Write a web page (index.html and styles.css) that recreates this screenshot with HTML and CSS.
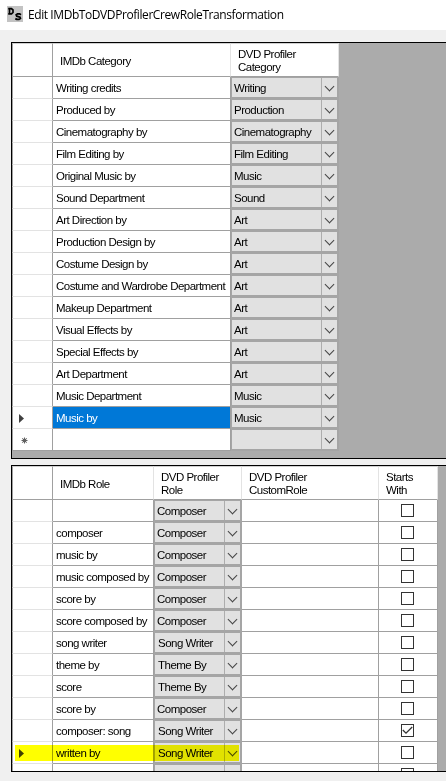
FILE: index.html
```html
<!DOCTYPE html>
<html lang="en">
<head>
<meta charset="utf-8">
<title>Edit IMDbToDVDProfilerCrewRoleTransformation</title>
<link rel="stylesheet" href="styles.css">
</head>
<body>
<header class="titlebar">
  <svg class="logo" width="16" height="16" viewBox="0 0 16 16"><rect width="16" height="16" fill="#c3c3c3"/><path d="M1.2 2.6H4.4L6 4V6.4L4.5 7.8H1.2M2.5 2.6V7.8" fill="none" stroke="#000" stroke-width="1.7"/><path d="M14 8.8L12.5 7.8H10.5L9.2 8.8L9.8 10.2L13 11.2L13.4 12.4L12 13.4H9.8L8.3 12.6" fill="none" stroke="#000" stroke-width="1.8"/></svg>
  <h1>Edit IMDbToDVDProfilerCrewRoleTransformation</h1>
</header>
<main>
  <section class="grid categories">
    <div class="row head"><div class="rh"></div><div class="cell">IMDb Category</div><div class="cell">DVD Profiler<br>Category</div></div>
    <div class="row"><div class="rh"></div><div class="cell">Writing credits</div><div class="combo">Writing<i></i></div></div>
    <div class="row"><div class="rh"></div><div class="cell">Produced by</div><div class="combo">Production<i></i></div></div>
    <div class="row"><div class="rh"></div><div class="cell">Cinematography by</div><div class="combo">Cinematography<i></i></div></div>
    <div class="row"><div class="rh"></div><div class="cell">Film Editing by</div><div class="combo">Film Editing<i></i></div></div>
    <div class="row"><div class="rh"></div><div class="cell">Original Music by</div><div class="combo">Music<i></i></div></div>
    <div class="row"><div class="rh"></div><div class="cell">Sound Department</div><div class="combo">Sound<i></i></div></div>
    <div class="row"><div class="rh"></div><div class="cell">Art Direction by</div><div class="combo">Art<i></i></div></div>
    <div class="row"><div class="rh"></div><div class="cell">Production Design by</div><div class="combo">Art<i></i></div></div>
    <div class="row"><div class="rh"></div><div class="cell">Costume Design by</div><div class="combo">Art<i></i></div></div>
    <div class="row"><div class="rh"></div><div class="cell">Costume and Wardrobe Department</div><div class="combo">Art<i></i></div></div>
    <div class="row"><div class="rh"></div><div class="cell">Makeup Department</div><div class="combo">Art<i></i></div></div>
    <div class="row"><div class="rh"></div><div class="cell">Visual Effects by</div><div class="combo">Art<i></i></div></div>
    <div class="row"><div class="rh"></div><div class="cell">Special Effects by</div><div class="combo">Art<i></i></div></div>
    <div class="row"><div class="rh"></div><div class="cell">Art Department</div><div class="combo">Art<i></i></div></div>
    <div class="row"><div class="rh"></div><div class="cell">Music Department</div><div class="combo">Music<i></i></div></div>
    <div class="row"><div class="rh"><svg width="5" height="9" viewBox="0 0 5 9"><path d="M0 0L5 4.5L0 9Z" fill="#404040"/></svg></div><div class="cell selected">Music by</div><div class="combo">Music<i></i></div></div>
    <div class="row"><div class="rh new"><svg width="7" height="7" viewBox="0 0 7 7"><circle cx="3.5" cy="3.5" r="2" fill="#404040"/><path d="M3.5 .5V6.5M.5 3.5H6.5M1.3 1.3L5.7 5.7M5.7 1.3L1.3 5.7" stroke="#606060"/></svg></div><div class="cell"></div><div class="combo"><i></i></div></div>
  </section>
  <section class="grid roles">
    <div class="row head"><div class="rh"></div><div class="cell">IMDb Role</div><div class="cell">DVD Profiler<br>Role</div><div class="cell">DVD Profiler<br>CustomRole</div><div class="cell">Starts<br>With</div></div>
    <div class="row"><div class="rh"></div><div class="cell"></div><div class="combo">Composer<i></i></div><div class="cell"></div><div class="check"><b></b></div></div>
    <div class="row"><div class="rh"></div><div class="cell">composer</div><div class="combo">Composer<i></i></div><div class="cell"></div><div class="check"><b></b></div></div>
    <div class="row"><div class="rh"></div><div class="cell">music by</div><div class="combo">Composer<i></i></div><div class="cell"></div><div class="check"><b></b></div></div>
    <div class="row"><div class="rh"></div><div class="cell">music composed by</div><div class="combo">Composer<i></i></div><div class="cell"></div><div class="check"><b></b></div></div>
    <div class="row"><div class="rh"></div><div class="cell">score by</div><div class="combo">Composer<i></i></div><div class="cell"></div><div class="check"><b></b></div></div>
    <div class="row"><div class="rh"></div><div class="cell">score composed by</div><div class="combo">Composer<i></i></div><div class="cell"></div><div class="check"><b></b></div></div>
    <div class="row"><div class="rh"></div><div class="cell">song writer</div><div class="combo inset">Song Writer<i></i></div><div class="cell"></div><div class="check"><b></b></div></div>
    <div class="row"><div class="rh"></div><div class="cell">theme by</div><div class="combo inset">Theme By<i></i></div><div class="cell"></div><div class="check"><b></b></div></div>
    <div class="row"><div class="rh"></div><div class="cell">score</div><div class="combo inset">Theme By<i></i></div><div class="cell"></div><div class="check"><b></b></div></div>
    <div class="row"><div class="rh"></div><div class="cell">score by</div><div class="combo">Composer<i></i></div><div class="cell"></div><div class="check"><b></b></div></div>
    <div class="row"><div class="rh"></div><div class="cell">composer: song</div><div class="combo inset">Song Writer<i></i></div><div class="cell"></div><div class="check"><b><svg width="11" height="11" viewBox="0 0 11 11"><path d="M.8 5L4 8.2L10.2 2" fill="none" stroke="#333" stroke-width="1.3"/></svg></b></div></div>
    <div class="row marked"><div class="rh"><svg width="5" height="9" viewBox="0 0 5 9"><path d="M0 0L5 4.5L0 9Z" fill="#404040"/></svg></div><div class="cell">written by</div><div class="combo inset">Song Writer<i></i></div><div class="cell"></div><div class="check"><b></b></div></div>
    <div class="row"><div class="rh"></div><div class="cell"></div><div class="combo"><i></i></div><div class="cell"></div><div class="check"><b></b></div></div>
  </section>
</main>
</body>
</html>
```
FILE: styles.css
```css
* { box-sizing: border-box; }
body {
  margin: 0;
  height: 781px;
  overflow: hidden;
  background: #f0f0f0;
  color: #000;
  font: 11.5px/13px "Liberation Sans", Arial, sans-serif;
  letter-spacing: -0.51px;
}
.titlebar {
  height: 30px;
  padding-left: 7px;
  display: flex;
  align-items: center;
  gap: 5px;
  background: #fff;
}
.logo { display: block; margin-top: -2px; }
h1 {
  margin: 0;
  font: 12px/16px "Open Sans", "Noto Sans", sans-serif;
  letter-spacing: -0.42px;
  white-space: nowrap;
}
main {
  padding: 12px 0 0 11px;
  display: flex;
  flex-direction: column;
  gap: 6px;
}
.grid {
  border: 1px solid #000;
  border-right: 0;
  background: #ababab;
  overflow: hidden;
}
.categories { height: 417px; --cols: 41px 178px 108px; }
.roles { height: 307px; --cols: 41px 101px 88px 137px 59px; }
.row {
  display: grid;
  grid-template-columns: var(--cols);
  grid-template-rows: 22px;
  position: relative;
}
.row > div {
  border-right: 1px solid #a0a0a0;
  border-bottom: 1px solid #a0a0a0;
  background-color: #fff;
  white-space: nowrap;
}
.row > .cell { padding: 5px 0 0 3px; }
.row.head { grid-template-rows: 34px; }
.row.head > div { border-top: 1px solid #d0d0d0; }
.row.head > .cell {
  display: flex;
  align-items: center;
  padding: 2px 0 0 7px;
  border-right-color: #e3e3e3;
}
.row.head > .cell:nth-child(2) { padding-top: 3px; }
.row > .rh {
  padding: 7px 0 0 6px;
  border-left: 1px solid #a0a0a0;
  border-bottom-color: #e3e3e3;
}
.row.head > .rh, .row:last-child > .rh { border-bottom-color: #a0a0a0; }
.rh svg { display: block; }
.row > .rh.new { padding: 8px 0 0 8px; }
.row > .selected { background: #0078d7; color: #fff; }
.row > .combo {
  position: relative;
  padding: 4px 0 0 2px;
  background: #e1e1e1;
  border: 1px solid #a5a5a5;
  border-width: 1px 2px 2px 1px;
}
.row > .inset { padding-left: 3px; }
.combo i {
  position: absolute;
  top: 0;
  right: 0;
  width: 16px;
  height: 100%;
  border-left: 1px solid #adadad;
}
.combo i::after {
  content: "";
  position: absolute;
  left: 4px;
  top: 4.5px;
  width: 6px;
  height: 6px;
  border: solid #444;
  border-width: 0 1px 1px 0;
  transform: rotate(45deg);
}
.check { padding: 4px 0 0 22px; }
.check b {
  display: block;
  width: 13px;
  height: 13px;
  border: 1px solid #333;
}
.check svg { display: block; }
.marked::after {
  content: "";
  position: absolute;
  left: 3px;
  top: 3px;
  width: 224px;
  height: 16px;
  background: #ff0;
  mix-blend-mode: multiply;
}
```
